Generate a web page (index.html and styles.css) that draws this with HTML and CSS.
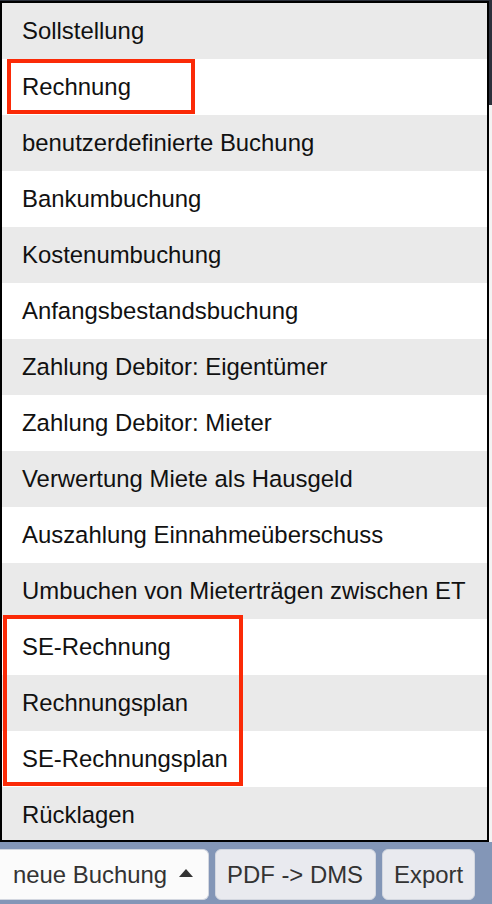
FILE: index.html
```html
<!DOCTYPE html>
<html lang="de">
<head>
<meta charset="utf-8">
<title>neue Buchung</title>
<link rel="stylesheet" href="styles.css">
</head>
<body>
<div class="page">
  <ul class="menu">
    <li class="item">Sollstellung</li>
    <li class="item">Rechnung</li>
    <li class="item">benutzerdefinierte Buchung</li>
    <li class="item">Bankumbuchung</li>
    <li class="item">Kostenumbuchung</li>
    <li class="item">Anfangsbestandsbuchung</li>
    <li class="item">Zahlung Debitor: Eigentümer</li>
    <li class="item">Zahlung Debitor: Mieter</li>
    <li class="item">Verwertung Miete als Hausgeld</li>
    <li class="item">Auszahlung Einnahmeüberschuss</li>
    <li class="item">Umbuchen von Mieterträgen zwischen ET</li>
    <li class="item">SE-Rechnung</li>
    <li class="item">Rechnungsplan</li>
    <li class="item">SE-Rechnungsplan</li>
    <li class="item">Rücklagen</li>
  </ul>
  <div class="toolbar">
    <button class="btn btn-primary">neue Buchung <span class="caret"></span></button>
    <button class="btn">PDF -&gt; DMS</button>
    <button class="btn">Export</button>
  </div>
  <div class="mark mark-one"></div>
  <div class="mark mark-two"></div>
</div>
</body>
</html>
```

FILE: styles.css
```css
* { box-sizing: border-box; }
html, body {
  margin: 0;
  padding: 0;
  width: 492px;
  height: 904px;
  overflow: hidden;
}
body {
  background: linear-gradient(to bottom, #2c313c 0, #2c313c 105px, #f3f3f3 105px);
  font-family: "Liberation Sans", Arial, Helvetica, sans-serif;
}
.page {
  position: relative;
  width: 492px;
  height: 904px;
  display: flex;
  flex-direction: column;
}
.menu {
  list-style: none;
  margin: 1px 0 0 0;
  padding: 0;
  width: 489px;
  height: 841px;
  border: 2px solid #000;
  overflow: hidden;
  background: #fff;
  flex: none;
}
.item {
  height: 56px;
  line-height: 56px;
  padding-left: 20px;
  font-size: 23.9px;
  color: #111;
  white-space: nowrap;
  background: #fff;
}
.item:nth-child(odd) { background: #eaeaea; }
.toolbar {
  flex: 1;
  background: #8396b7;
  display: flex;
  gap: 6px;
  padding-top: 7px;
  align-items: flex-start;
}
.btn {
  height: 51px;
  border: 1px solid #d3d7e0;
  border-radius: 6px;
  background: #e9eaef;
  color: #333;
  font-family: "Liberation Sans", Arial, Helvetica, sans-serif;
  font-size: 23.9px;
  padding: 0 11px;
  display: flex;
  align-items: center;
  margin: 0;
}
.btn-primary {
  background: #fbfbfb;
  width: 209px;
  border-radius: 0 6px 6px 0;
  border-left: none;
  padding-left: 13px;
}
.btn:nth-child(2) { width: 161px; }
.btn:nth-child(3) { width: 93px; }
.caret {
  display: inline-block;
  width: 0;
  height: 0;
  margin-left: 12px;
  border-left: 7px solid transparent;
  border-right: 7px solid transparent;
  border-bottom: 8px solid #333;
  position: relative;
  top: -2px;
}
.mark {
  position: absolute;
  border: 4px solid #fb2a07;
}
.mark-one {
  left: 7px;
  top: 59px;
  width: 188px;
  height: 55px;
}
.mark-two {
  left: 3px;
  top: 615px;
  width: 240px;
  height: 171px;
}
```
